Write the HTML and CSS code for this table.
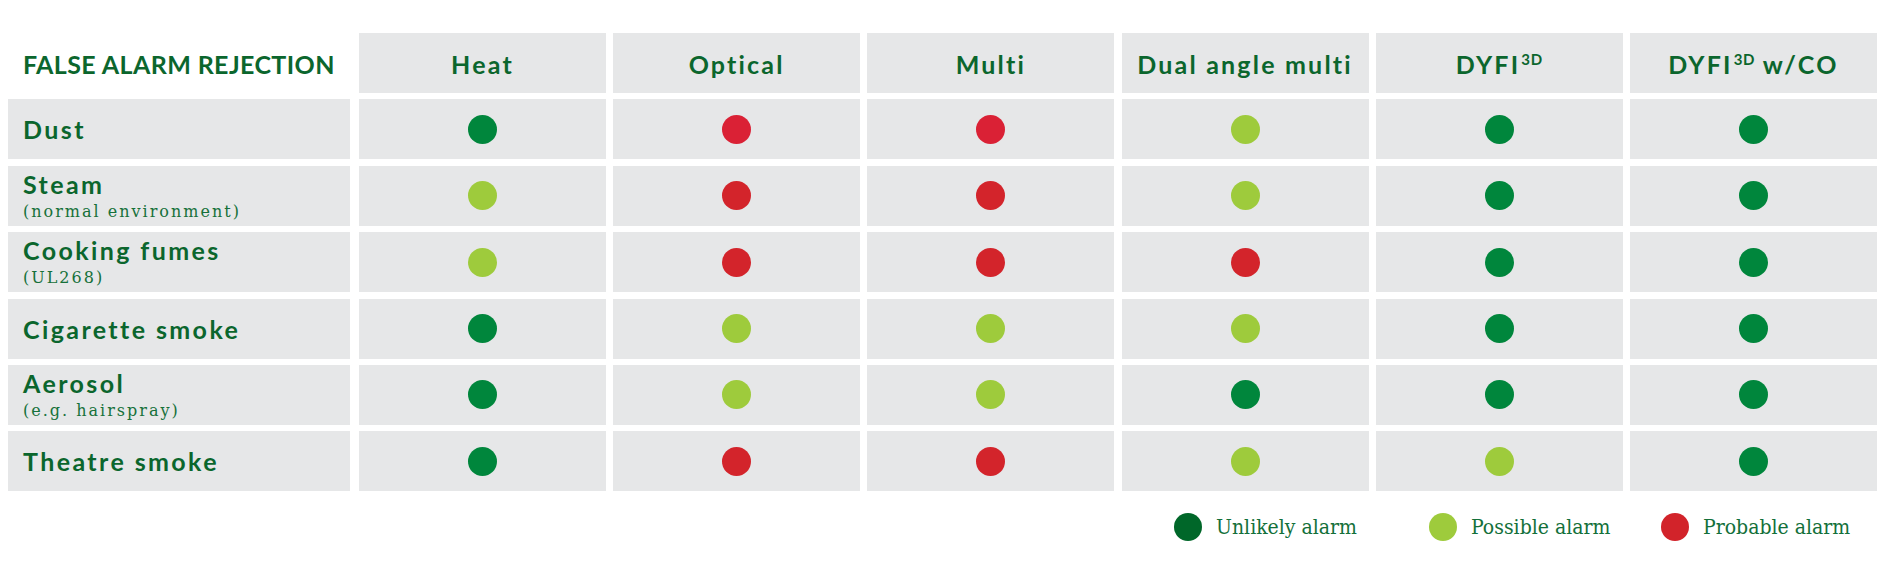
FILE: index.html
```html
<!DOCTYPE html>
<html lang="en">
<head>
<meta charset="utf-8">
<title>False alarm rejection</title>
<link rel="stylesheet" href="styles.css">
</head>
<body>
<div class="page">
  <div class="grid">
    <div class="corner"><span>FALSE ALARM REJECTION</span></div>
    <div class="head"><span>Heat</span></div>
    <div class="head"><span>Optical</span></div>
    <div class="head"><span>Multi</span></div>
    <div class="head"><span>Dual angle multi</span></div>
    <div class="head"><span>DYFI<sup>3D</sup></span></div>
    <div class="head"><span>DYFI<sup>3D</sup> w/CO</span></div>

    <div class="label"><span class="main">Dust</span></div>
    <div class="cell"><span class="dot dark"></span></div>
    <div class="cell"><span class="dot red red1"></span></div>
    <div class="cell"><span class="dot red red1"></span></div>
    <div class="cell"><span class="dot light"></span></div>
    <div class="cell"><span class="dot dark"></span></div>
    <div class="cell"><span class="dot dark"></span></div>

    <div class="label"><span class="main">Steam</span><span class="sub">(normal environment)</span></div>
    <div class="cell"><span class="dot light"></span></div>
    <div class="cell"><span class="dot red"></span></div>
    <div class="cell"><span class="dot red"></span></div>
    <div class="cell"><span class="dot light"></span></div>
    <div class="cell"><span class="dot dark"></span></div>
    <div class="cell"><span class="dot dark"></span></div>

    <div class="label"><span class="main">Cooking fumes</span><span class="sub">(UL268)</span></div>
    <div class="cell"><span class="dot light"></span></div>
    <div class="cell"><span class="dot red"></span></div>
    <div class="cell"><span class="dot red"></span></div>
    <div class="cell"><span class="dot red"></span></div>
    <div class="cell"><span class="dot dark"></span></div>
    <div class="cell"><span class="dot dark"></span></div>

    <div class="label"><span class="main">Cigarette smoke</span></div>
    <div class="cell"><span class="dot dark"></span></div>
    <div class="cell"><span class="dot light"></span></div>
    <div class="cell"><span class="dot light"></span></div>
    <div class="cell"><span class="dot light"></span></div>
    <div class="cell"><span class="dot dark"></span></div>
    <div class="cell"><span class="dot dark"></span></div>

    <div class="label"><span class="main">Aerosol</span><span class="sub">(e.g. hairspray)</span></div>
    <div class="cell"><span class="dot dark"></span></div>
    <div class="cell"><span class="dot light"></span></div>
    <div class="cell"><span class="dot light"></span></div>
    <div class="cell"><span class="dot dark"></span></div>
    <div class="cell"><span class="dot dark"></span></div>
    <div class="cell"><span class="dot dark"></span></div>

    <div class="label"><span class="main">Theatre smoke</span></div>
    <div class="cell"><span class="dot dark"></span></div>
    <div class="cell"><span class="dot red"></span></div>
    <div class="cell"><span class="dot red"></span></div>
    <div class="cell"><span class="dot light"></span></div>
    <div class="cell"><span class="dot light"></span></div>
    <div class="cell"><span class="dot dark"></span></div>
  </div>

  <div class="legend">
    <div class="item"><span class="ldot ldark"></span><span class="ltext">Unlikely alarm</span></div>
    <div class="item"><span class="ldot llight"></span><span class="ltext">Possible alarm</span></div>
    <div class="item"><span class="ldot lred"></span><span class="ltext">Probable alarm</span></div>
  </div>
</div>
</body>
</html>
```

FILE: styles.css
```css
html, body {
  margin: 0;
  padding: 0;
  background: #ffffff;
}

body {
  padding: 33px 6px 0 8px;
  font-family: Lato, "Open Sans", sans-serif;
  color: #0b662d;
}

.grid {
  display: grid;
  grid-template-columns: 343.8px repeat(6, 247px);
  grid-template-rows: 60px repeat(6, 60px);
  column-gap: 7.2px;
  row-gap: 6.4px;
  width: 1869px;
}

.corner {
  display: flex;
  align-items: center;
  padding-left: 15px;
  margin-right: 1.8px;
  font-weight: 700;
  font-size: 25px;
  letter-spacing: 0.4px;
  padding-top: 1px;
}

.head {
  background: #e6e7e8;
  display: flex;
  align-items: center;
  justify-content: center;
  font-weight: 700;
  font-size: 25px;
  letter-spacing: 2.2px;
  padding-top: 1px;
}

.head sup {
  font-size: 15px;
  letter-spacing: 0.6px;
  line-height: 0;
  vertical-align: 9px;
  margin-left: 1px;
}

.label {
  background: #e6e7e8;
  margin-right: 1.8px;
  display: flex;
  flex-direction: column;
  justify-content: center;
  padding-left: 15px;
}

.main {
  font-weight: 700;
  font-size: 25px;
  line-height: 26px;
  letter-spacing: 2.4px;
}

.sub {
  font-family: "DejaVu Serif", serif;
  font-size: 16px;
  line-height: 20px;
  letter-spacing: 2px;
  color: #16713a;
  margin-top: 5px;
  margin-bottom: -1px;
}

.cell {
  background: #e6e7e8;
  display: flex;
  align-items: center;
  justify-content: center;
}

.dot {
  width: 29px;
  height: 29px;
  border-radius: 50%;
  display: block;
}

.dark { background: #00863c; }
.light { background: #9ecb3c; }
.red { background: #d3242b; }
.red1 { background: #da2135; }

.legend {
  display: grid;
  grid-template-columns: 255px 232px auto;
  padding-left: 1166px;
  margin-top: 22px;
}

.item {
  display: flex;
  align-items: center;
  gap: 14px;
}

.ldot {
  width: 28px;
  height: 28px;
  border-radius: 50%;
  display: block;
  flex: none;
}

.ldark { background: #006729; }
.llight { background: #9ecb3c; }
.lred { background: #d2232a; }

.ltext {
  font-family: "DejaVu Serif Condensed", "DejaVu Serif", serif;
  font-size: 21px;
  line-height: 28px;
  color: #13703a;
}
```
